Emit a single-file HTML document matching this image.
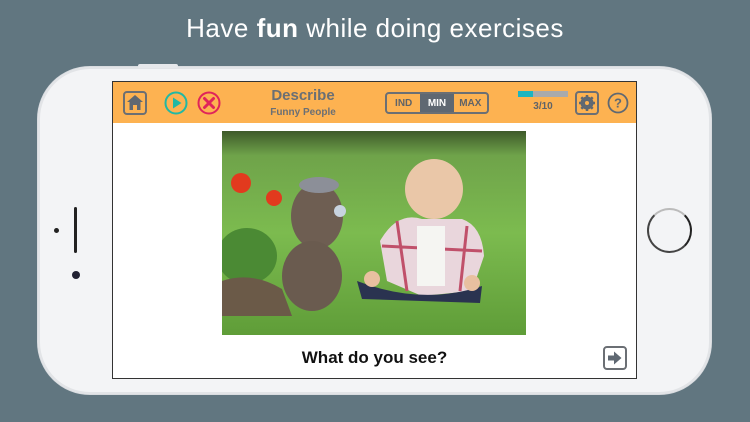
<!DOCTYPE html>
<html><head><meta charset="utf-8"><style>
*{margin:0;padding:0;box-sizing:border-box}
body{width:750px;height:422px;background:#617680;position:relative;overflow:hidden;font-family:"Liberation Sans",sans-serif}
.title{position:absolute;top:13px;left:0;width:750px;text-align:center;color:#fff;font-size:26px;letter-spacing:0.5px}
.phone{position:absolute;left:38px;top:67px;width:673px;height:327px;background:#f3f4f6;border-radius:52px;box-shadow:inset 0 0 0 2px #e2e4e7,0 0 0 1px #d9dce0}
.screen{position:absolute;left:112px;top:81px;width:525px;height:298px;background:#fff;border:1px solid #333}
.bar{position:absolute;left:0;top:0;width:523px;height:41px;background:#fdb251}
.ico{position:absolute}
.t1{position:absolute;left:130px;top:5px;width:120px;text-align:center;color:#6b6f74;font-weight:bold;font-size:15px}
.t2{position:absolute;left:130px;top:25px;width:120px;text-align:center;color:#6b6f74;font-weight:bold;font-size:10px}
.seg{position:absolute;left:272px;top:10px;width:104px;height:22px;border:2px solid #6b6f74;border-radius:4px;display:flex;font-size:10px;font-weight:bold;color:#5f6368;overflow:hidden}
.seg div{flex:1;text-align:center;line-height:19px;height:18px}
.seg .on{background:#5f6872;color:#fff}
.q{position:absolute;left:0;top:266px;width:523px;text-align:center;font-weight:bold;font-size:17px;color:#111}
</style></head><body>
<div class="title">Have <b>fun</b> while doing exercises</div>
<div class="phone"></div>
<div style="position:absolute;left:138px;top:64px;width:40px;height:4px;background:#e6e8eb;border-radius:2px"></div>
<div style="position:absolute;left:74px;top:207px;width:3px;height:46px;background:#222;border-radius:2px"></div>
<div style="position:absolute;left:54px;top:228px;width:5px;height:5px;background:#222;border-radius:50%"></div>
<div style="position:absolute;left:72px;top:271px;width:8px;height:8px;background:#223;border-radius:50%"></div>
<div style="position:absolute;left:647px;top:208px;width:45px;height:45px;border-radius:50%;border:2px solid #444;border-right-color:#222;border-top-color:#bbb"></div>
<div class="screen">
 <div class="bar">
  <svg class="ico" style="left:10px;top:9px" width="24" height="24" viewBox="0 0 24 24"><rect x="1" y="1" width="22" height="22" rx="3" fill="none" stroke="#6b6f74" stroke-width="2"/><path d="M12 4 L20 11 H17.5 V19 H14 V14 H10 V19 H6.5 V11 H4 Z" fill="#5f6872"/></svg>
  <svg class="ico" style="left:51px;top:9px" width="24" height="24" viewBox="0 0 24 24"><circle cx="12" cy="12" r="10.5" fill="none" stroke="#21b8a4" stroke-width="2"/><path d="M9 6.5 L17.5 12 L9 17.5Z" fill="#21b8a4"/></svg>
  <svg class="ico" style="left:84px;top:9px" width="24" height="24" viewBox="0 0 24 24"><circle cx="12" cy="12" r="10.5" fill="none" stroke="#e0245a" stroke-width="2"/><path d="M7.5 7.5 L16.5 16.5 M16.5 7.5 L7.5 16.5" stroke="#e0245a" stroke-width="3" stroke-linecap="round"/></svg>
  <div class="t1">Describe</div><div class="t2">Funny People</div>
  <div class="seg"><div>IND</div><div class="on">MIN</div><div>MAX</div></div>
  <div style="position:absolute;left:405px;top:9px;width:50px;height:6px;background:#a9aaac"><div style="width:15px;height:6px;background:#1cb5c0"></div></div>
  <div style="position:absolute;left:405px;top:19px;width:50px;text-align:center;font-size:10px;font-weight:bold;color:#5f6368">3/10</div>
  <svg class="ico" style="left:462px;top:9px" width="24" height="24" viewBox="0 0 24 24"><rect x="1" y="1" width="22" height="22" rx="3" fill="none" stroke="#6b6f74" stroke-width="2"/><circle cx="12" cy="12" r="5" fill="none" stroke="#5f6872" stroke-width="3"/><path d="M12 4V20M4 12H20M6.3 6.3L17.7 17.7M17.7 6.3L6.3 17.7" stroke="#5f6872" stroke-width="2.5"/><circle cx="12" cy="12" r="2" fill="#fdb251"/></svg>
  <svg class="ico" style="left:494px;top:10px" width="22" height="22" viewBox="0 0 22 22"><circle cx="11" cy="11" r="9.5" fill="none" stroke="#5f6872" stroke-width="1.8"/><text x="11" y="15.5" text-anchor="middle" font-size="13" font-weight="bold" fill="#5f6872" font-family="Liberation Sans">?</text></svg>
 </div>
 <svg style="position:absolute;left:109px;top:49px" width="304" height="204" viewBox="0 0 304 204">
  <defs><linearGradient id="g" x1="0" y1="0" x2="0" y2="1"><stop offset="0" stop-color="#3e5a2a"/><stop offset="0.12" stop-color="#6fa34a"/><stop offset="0.5" stop-color="#7cbb4f"/><stop offset="1" stop-color="#5f9d38"/></linearGradient></defs>
  <rect width="304" height="204" fill="url(#g)"/>
  <ellipse cx="25" cy="125" rx="30" ry="28" fill="#4b8a34"/>
  <circle cx="19" cy="52" r="10" fill="#e23a1e"/><circle cx="52" cy="67" r="8" fill="#e23a1e"/>
  <path d="M0 150 Q30 140 60 158 L70 185 L0 185Z" fill="#6b5a48"/>
  <ellipse cx="95" cy="85" rx="26" ry="33" fill="#6e5e52"/>
  <ellipse cx="90" cy="145" rx="30" ry="35" fill="#6a5b4f"/>
  <ellipse cx="97" cy="54" rx="20" ry="8" fill="#8c8f98"/>
  <circle cx="118" cy="80" r="6" fill="#c8d3df"/>
  <ellipse cx="212" cy="58" rx="29" ry="30" fill="#eac7a8"/>
  <path d="M158 110 Q175 80 200 88 L240 88 Q260 95 262 125 L250 160 L200 165 L165 150Z" fill="#e9d6dc"/>
  <path d="M175 90 L185 160 M245 95 L238 160 M160 115 L260 120" stroke="#c0506a" stroke-width="3"/>
  <rect x="195" y="95" width="28" height="60" fill="#f5f5f2"/>
  <path d="M135 150 Q200 175 260 155 L258 172 L140 168Z" fill="#2a3350"/>
  <circle cx="150" cy="148" r="8" fill="#e8c0a0"/><circle cx="250" cy="152" r="8" fill="#e8c0a0"/>
 </svg>
 <div class="q">What do you see?</div>
 <svg style="position:absolute;left:490px;top:264px" width="24" height="24" viewBox="0 0 24 24"><rect x="1" y="1" width="22" height="22" rx="3" fill="none" stroke="#6b6f74" stroke-width="2"/><path d="M5 9.5 H11 V5.5 L18.5 12 L11 18.5 V14.5 H5Z" fill="#5f6872"/></svg>
</div>
</body></html>
